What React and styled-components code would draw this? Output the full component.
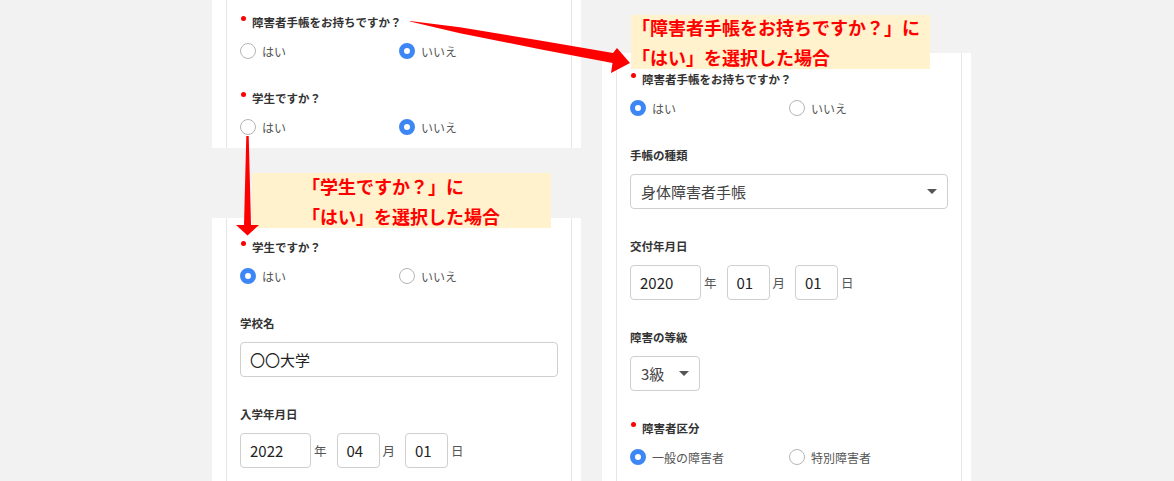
import React from 'react';
import styled, { createGlobalStyle, css } from 'styled-components';

const GlobalStyle = createGlobalStyle`
  html, body {
    margin: 0;
    padding: 0;
    background: #f2f2f2;
  }
  body {
    font-family: "Noto Sans CJK JP", "Noto Sans", sans-serif;
  }
  * {
    box-sizing: border-box;
  }
`;

const Stage = styled.div`
  position: relative;
  width: 1174px;
  height: 481px;
  overflow: hidden;
  display: flex;
  gap: 21px;
  padding-left: 212px;
`;

const Column = styled.div`
  width: 369px;
  display: flex;
  flex-direction: column;
  padding-top: ${p => p.$top || 0}px;
`;

const Panel = styled.div`
  display: flex;
  background: #fff;
  padding: 0 12px 0 14px;
  margin-top: ${p => p.$offset || 0}px;
  ${p => p.$height ? css`height: ${p.$height}px;` : css`flex: 1;`}
`;

const Card = styled.div`
  flex: 1;
  display: flex;
  flex-direction: column;
  gap: 29px;
  padding: ${p => p.$top}px 13px 0 13px;
  border-left: 1px solid #e6e6e6;
  border-right: 1px solid #e6e6e6;
`;

const Note = styled.div`
  position: relative;
  z-index: 2;
  width: 299px;
  height: ${p => p.$h}px;
  margin: ${p => p.$mt}px 0 0 ${p => p.$ml}px;
  padding-left: ${p => p.$pl}px;
  display: flex;
  flex-direction: column;
  justify-content: center;
  background: #fff2cc;
  color: #ff0000;
  font-size: 18px;
  font-weight: 700;
  line-height: 30px;
  white-space: nowrap;
`;

const Field = styled.div`
  display: flex;
  flex-direction: column;
  gap: 11px;
`;

const Label = styled.div`
  display: flex;
  align-items: center;
  height: 16px;
  font-size: 11.5px;
  font-weight: 700;
  color: #333;
  ${p => p.$required && css`
    &::before {
      content: '';
      width: 5px;
      height: 5px;
      margin: 0 6px 0 1px;
      border-radius: 50%;
      background: #f00;
      transform: translateY(-4px);
    }
  `}
`;

const Options = styled.div`
  display: flex;
  align-items: center;
  height: 20px;
`;

const Option = styled.label`
  width: 159px;
  display: flex;
  align-items: center;
  gap: 6px;
  font-size: 12px;
  color: #555;
`;

const RadioMark = styled.span`
  flex: none;
  width: 16px;
  height: 16px;
  border-radius: 50%;
  background: #fff;
  border: ${p => p.$checked ? '5px solid #3d86f5' : '1.5px solid #b5b5b5'};
`;

const TextInput = styled.input`
  width: ${p => p.$w ? `${p.$w}px` : '100%'};
  height: 35px;
  padding: 0 9px;
  border: 1px solid #cfcfcf;
  border-radius: 4px;
  font-family: "Noto Sans CJK JP", "Noto Sans", sans-serif;
  font-size: 15px;
  color: #222;
  background: #fff;
  outline: none;
`;

const Select = styled.div`
  width: ${p => p.$w ? `${p.$w}px` : '100%'};
  height: 35px;
  display: flex;
  align-items: center;
  justify-content: space-between;
  padding: 0 10px;
  border: 1px solid #cfcfcf;
  border-radius: 4px;
  font-size: 15px;
  color: #444;
`;

const Caret = styled.span`
  width: 0;
  height: 0;
  border-left: 5.5px solid transparent;
  border-right: 5.5px solid transparent;
  border-top: 5px solid #555;
`;

const DateRow = styled.div`
  display: flex;
  align-items: center;
`;

const Unit = styled.span`
  margin: 0 10px 0 3px;
  font-size: 12.5px;
  color: #555;
`;

const Overlay = styled.svg`
  position: absolute;
  left: 0;
  top: 0;
  z-index: 3;
  pointer-events: none;
`;

const Radios = ({ options, checked }) => (
  <Options>
    {options.map((o, i) => (
      <Option key={o}>
        <RadioMark $checked={i === checked} />
        {o}
      </Option>
    ))}
  </Options>
);

const DateInput = ({ y, m, d }) => (
  <DateRow>
    <TextInput $w={71} defaultValue={y} readOnly />
    <Unit>年</Unit>
    <TextInput $w={43} defaultValue={m} readOnly />
    <Unit>月</Unit>
    <TextInput $w={43} defaultValue={d} readOnly />
    <Unit>日</Unit>
  </DateRow>
);

const YES_NO = ['はい', 'いいえ'];

const Arrows = () => (
  <Overlay width="1174" height="481" viewBox="0 0 1174 481">
    <polygon
      fill="#ff0000"
      points="410,21 460,27.3 540,40.6 613,53 617,48 630,63 611,73 612.5,63 540,49.2 460,33.2 410,21.6"
    />
    <polygon
      fill="#ff0000"
      points="246.3,136 248.7,136 251,225 259,225 247.5,235.5 236,225 244,225"
    />
  </Overlay>
);

export default function App() {
  return (
    <>
      <GlobalStyle />
      <Stage>
        <Column>
          <Panel $height={148}>
            <Card $top={14}>
              <Field>
                <Label $required>障害者手帳をお持ちですか？</Label>
                <Radios options={YES_NO} checked={1} />
              </Field>
              <Field>
                <Label $required>学生ですか？</Label>
                <Radios options={YES_NO} checked={1} />
              </Field>
            </Card>
          </Panel>
          <Note $mt={25} $ml={40} $h={55} $pl={50}>
            <span>「学生ですか？」に</span>
            <span>「はい」を選択した場合</span>
          </Note>
          <Panel $offset={-10}>
            <Card $top={21}>
              <Field>
                <Label $required>学生ですか？</Label>
                <Radios options={YES_NO} checked={0} />
              </Field>
              <Field>
                <Label>学校名</Label>
                <TextInput defaultValue="〇〇大学" readOnly />
              </Field>
              <Field>
                <Label>入学年月日</Label>
                <DateInput y="2022" m="04" d="01" />
              </Field>
            </Card>
          </Panel>
        </Column>

        <Column $top={15}>
          <Note $mt={0} $ml={29} $h={54} $pl={1}>
            <span>「障害者手帳をお持ちですか？」に</span>
            <span>「はい」を選択した場合</span>
          </Note>
          <Panel $offset={-16}>
            <Card $top={18}>
              <Field>
                <Label $required>障害者手帳をお持ちですか？</Label>
                <Radios options={YES_NO} checked={0} />
              </Field>
              <Field>
                <Label>手帳の種類</Label>
                <Select>
                  <span>身体障害者手帳</span>
                  <Caret />
                </Select>
              </Field>
              <Field>
                <Label>交付年月日</Label>
                <DateInput y="2020" m="01" d="01" />
              </Field>
              <Field>
                <Label>障害の等級</Label>
                <Select $w={70}>
                  <span>3級</span>
                  <Caret />
                </Select>
              </Field>
              <Field>
                <Label $required>障害者区分</Label>
                <Radios options={['一般の障害者', '特別障害者']} checked={0} />
              </Field>
            </Card>
          </Panel>
        </Column>
        <Arrows />
      </Stage>
    </>
  );
}
